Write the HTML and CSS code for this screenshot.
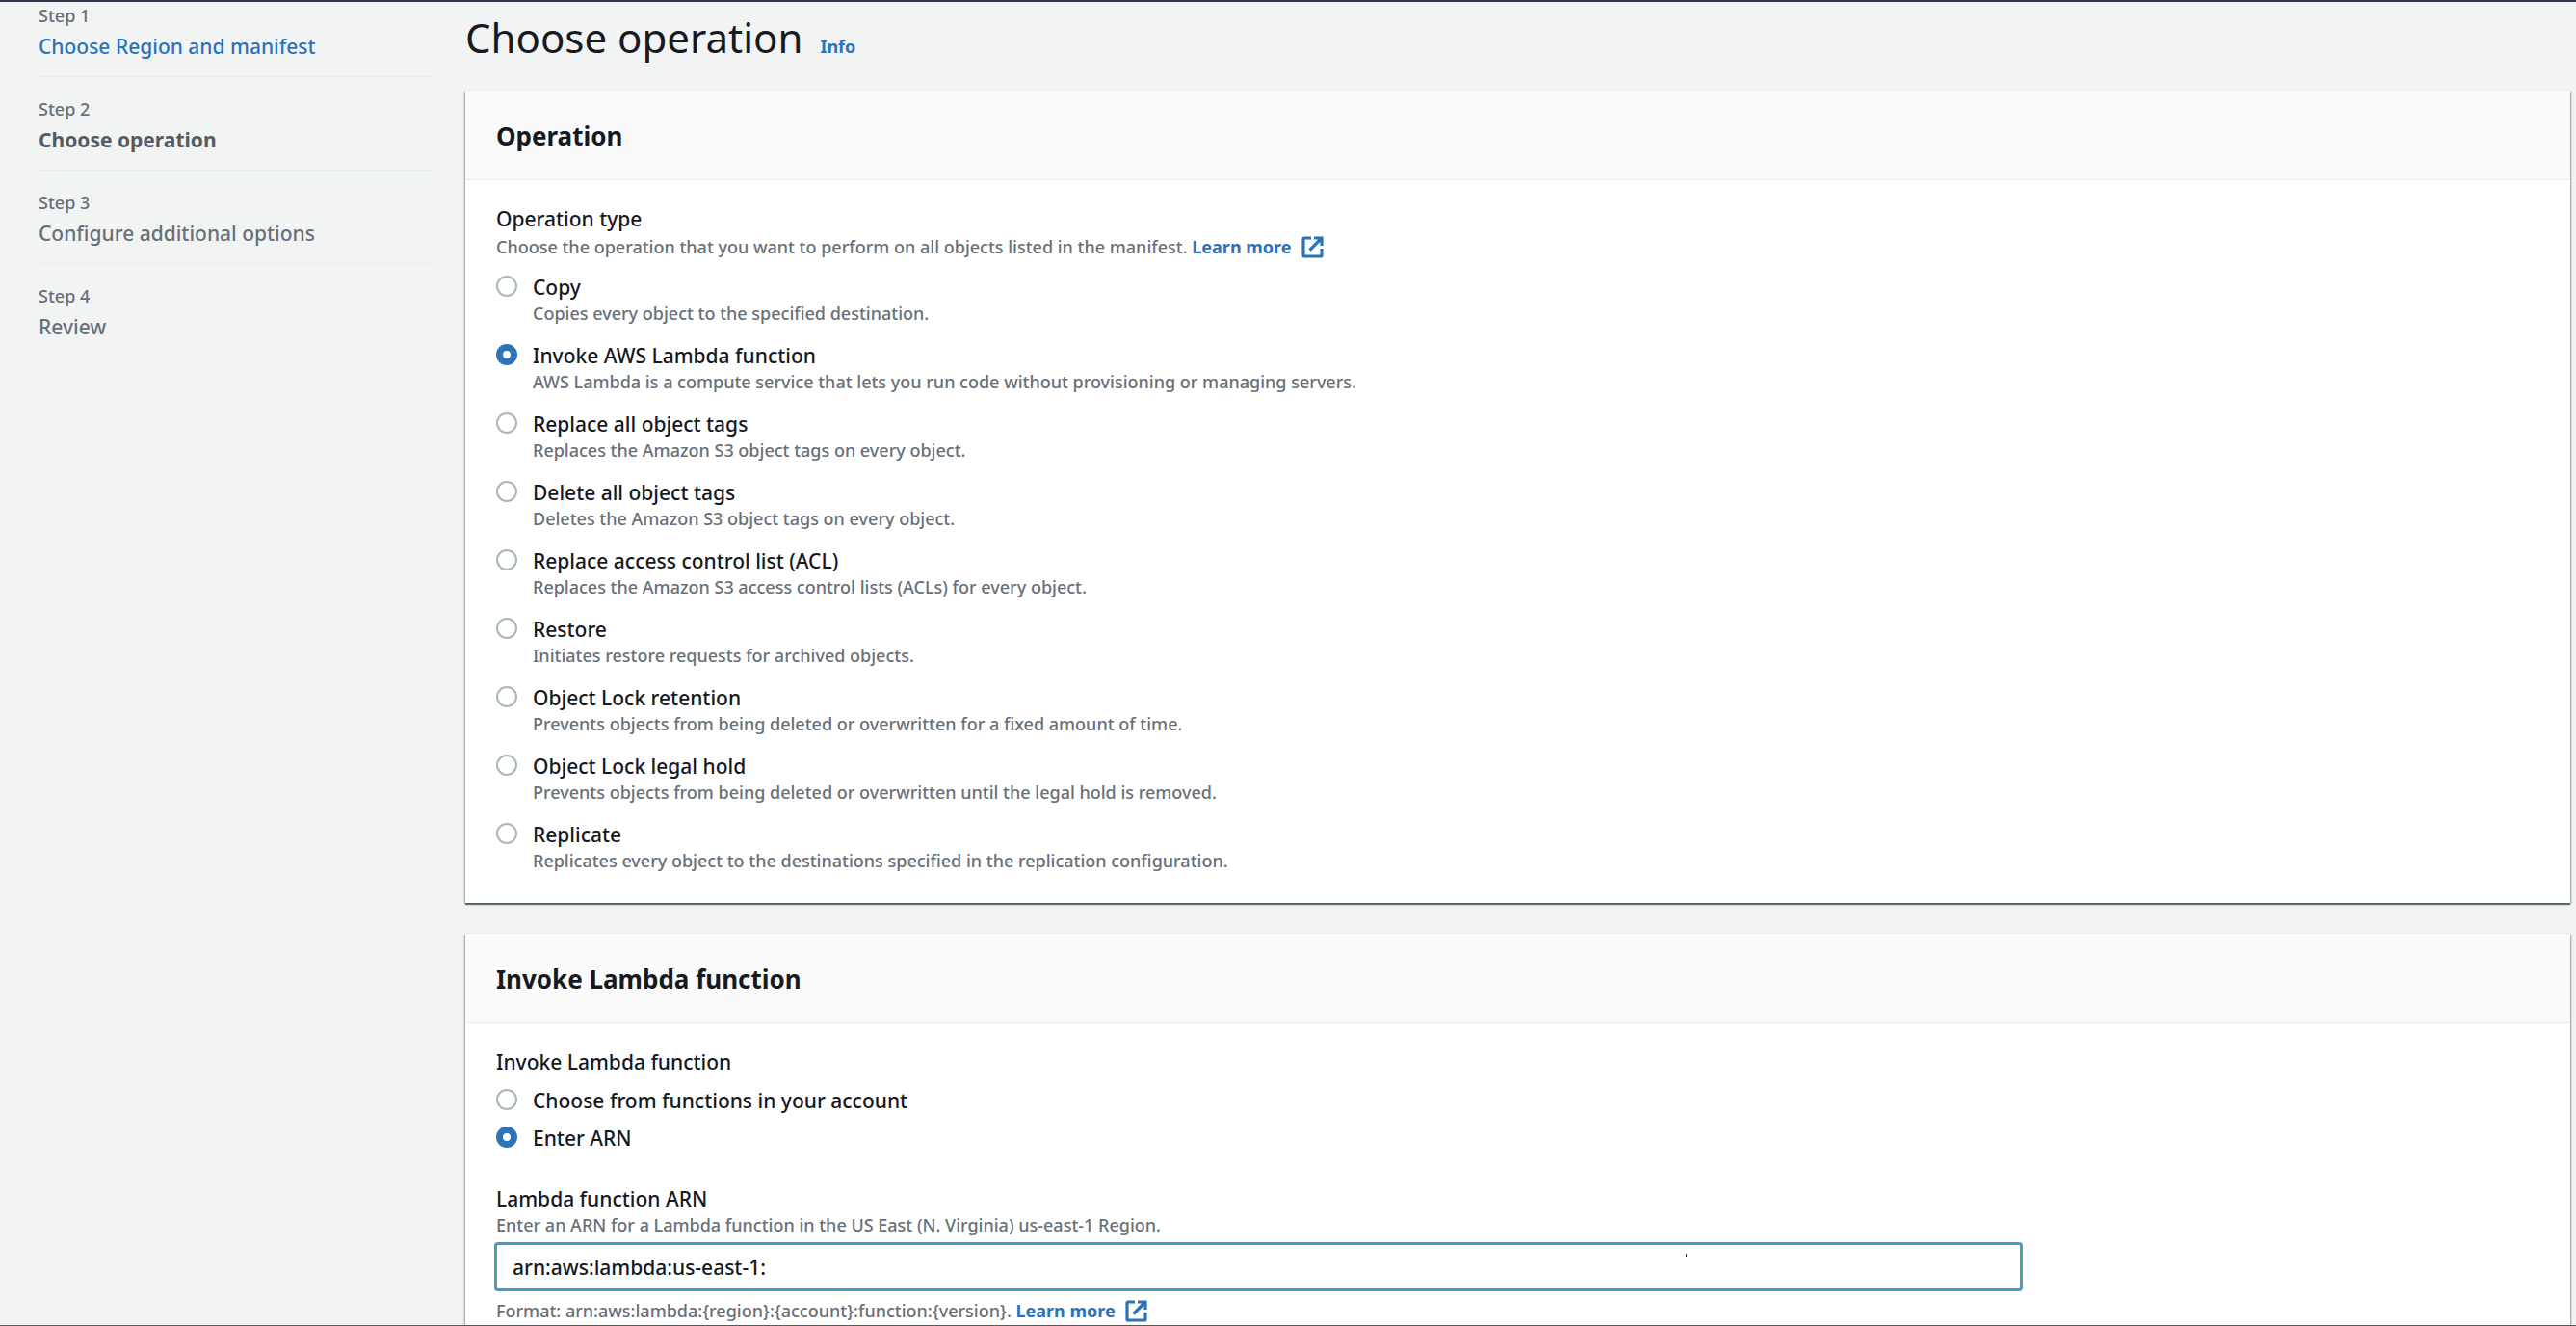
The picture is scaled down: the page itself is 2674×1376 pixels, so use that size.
FILE: index.html
```html
<!DOCTYPE html>
<html lang="en">
<head>
<meta charset="utf-8">
<meta name="viewport" content="width=device-width, initial-scale=1">
<title>Choose operation</title>
<link rel="stylesheet" href="styles.css">
</head>
<body>
<svg class="sprite" aria-hidden="true">
  <symbol id="external" viewBox="0 0 23 23">
    <path d="M10 2H3Q2 2 2 3V20Q2 21 3 21H20Q21 21 21 20V13M13 2H21V10M21 2L8.500 14.500" fill="none" stroke="currentColor" stroke-width="3.200"/>
  </symbol>
</svg>
<div class="page">
  <nav class="steps" aria-label="Steps">
    <ol class="steps-list">
      <li class="step"><span class="step-number">Step 1</span><a class="step-name" href="#">Choose Region and manifest</a></li>
      <li class="step step-current" aria-current="step"><span class="step-number">Step 2</span><span class="step-name">Choose operation</span></li>
      <li class="step"><span class="step-number">Step 3</span><span class="step-name">Configure additional options</span></li>
      <li class="step"><span class="step-number">Step 4</span><span class="step-name">Review</span></li>
    </ol>
  </nav>
  <main class="content">
    <div class="title-row">
      <h1>Choose operation</h1>
      <a class="link" href="#">Info</a>
    </div>

    <section class="card">
      <header class="card-header"><h2>Operation</h2></header>
      <div class="card-body" role="radiogroup" aria-labelledby="type-label">
        <p class="label" id="type-label">Operation type</p>
        <p class="hint hint-link">Choose the operation that you want to perform on all objects listed in the manifest. <a class="link" href="#">Learn more<svg class="icon" aria-hidden="true"><use href="#external"/></svg></a></p>
        <div class="options options-described">
          <label class="option"><input type="radio" name="operation"><span class="label">Copy</span><span class="hint">Copies every object to the specified destination.</span></label>
          <label class="option"><input type="radio" name="operation" checked><span class="label">Invoke AWS Lambda function</span><span class="hint">AWS Lambda is a compute service that lets you run code without provisioning or managing servers.</span></label>
          <label class="option"><input type="radio" name="operation"><span class="label">Replace all object tags</span><span class="hint">Replaces the Amazon S3 object tags on every object.</span></label>
          <label class="option"><input type="radio" name="operation"><span class="label">Delete all object tags</span><span class="hint">Deletes the Amazon S3 object tags on every object.</span></label>
          <label class="option"><input type="radio" name="operation"><span class="label">Replace access control list (ACL)</span><span class="hint">Replaces the Amazon S3 access control lists (ACLs) for every object.</span></label>
          <label class="option"><input type="radio" name="operation"><span class="label">Restore</span><span class="hint">Initiates restore requests for archived objects.</span></label>
          <label class="option"><input type="radio" name="operation"><span class="label">Object Lock retention</span><span class="hint">Prevents objects from being deleted or overwritten for a fixed amount of time.</span></label>
          <label class="option"><input type="radio" name="operation"><span class="label">Object Lock legal hold</span><span class="hint">Prevents objects from being deleted or overwritten until the legal hold is removed.</span></label>
          <label class="option"><input type="radio" name="operation"><span class="label">Replicate</span><span class="hint">Replicates every object to the destinations specified in the replication configuration.</span></label>
        </div>
      </div>
    </section>

    <section class="card">
      <header class="card-header"><h2>Invoke Lambda function</h2></header>
      <div class="card-body">
        <div role="radiogroup" aria-labelledby="source-label">
          <p class="label" id="source-label">Invoke Lambda function</p>
          <div class="options">
            <label class="option"><input type="radio" name="source"><span class="label">Choose from functions in your account</span></label>
            <label class="option"><input type="radio" name="source" checked><span class="label">Enter ARN</span></label>
          </div>
        </div>
        <div class="field">
          <label class="label" for="arn">Lambda function ARN</label>
          <p class="hint" id="arn-hint">Enter an ARN for a Lambda function in the US East (N. Virginia) us-east-1 Region.</p>
          <div class="input-wrap">
            <input class="input" id="arn" type="text" value="arn:aws:lambda:us-east-1:" aria-describedby="arn-hint">
            <span class="caret-mark"></span>
          </div>
          <p class="hint hint-link">Format: arn:aws:lambda:{region}:{account}:function:{version}. <a class="link" href="#">Learn more<svg class="icon" aria-hidden="true"><use href="#external"/></svg></a></p>
        </div>
      </div>
    </section>
  </main>
</div>
</body>
</html>
```
FILE: styles.css
```css
* {
  box-sizing: border-box;
}

body {
  margin: 0;
  background: #f2f3f3;
  color: #16191f;
  font-family: "Noto Sans", "Open Sans", sans-serif;
  font-size: 21px;
  font-weight: 500;
  line-height: 28px;
}

h1, h2, p, ol {
  margin: 0;
  padding: 0;
}

.sprite {
  display: none;
}

.page {
  display: grid;
  grid-template-columns: 412px minmax(0, 1fr);
  column-gap: 31px;
  height: 100vh;
  overflow: hidden;
  padding: 0 6px 0 40px;
  border-top: 2px solid #2f3a4a;
  border-bottom: 1px solid #545b64;
}

/* Wizard steps */
.steps {
  padding-top: 1px;
}

.steps-list {
  display: flex;
  flex-direction: column;
  gap: 20px;
  list-style: none;
}

.step {
  display: flex;
  flex-direction: column;
  gap: 5px;
  padding-bottom: 17px;
  border-bottom: 1px solid #eaeded;
  color: #687078;
}

.step:last-child {
  border-bottom: 0;
}

.step-number {
  font-size: 18px;
  line-height: 26px;
}

.step-current .step-name {
  color: #545b64;
  font-weight: 700;
}

a {
  color: #2a73b8;
  text-decoration: none;
}

.link {
  font-size: 18px;
  font-weight: 700;
}

/* Page title */
.content {
  padding-top: 12px;
}

.title-row {
  display: flex;
  align-items: baseline;
  gap: 18px;
  margin-bottom: 30px;
}

h1 {
  font-size: 42px;
  font-weight: 400;
  line-height: 50px;
}

/* Cards */
.card {
  margin-bottom: 32px;
  background: #fff;
  box-shadow: 0 -1px 0 #eaeded, 0 2px 1px rgba(0, 28, 36, 0.5), 1px 1px 2px rgba(0, 28, 36, 0.3), -1px 1px 2px rgba(0, 28, 36, 0.3);
}

.card-header {
  padding: 30px 32px 28px;
  background: #fafafa;
  border-bottom: 1px solid #eaeded;
}

h2 {
  font-size: 26px;
  font-weight: 700;
  line-height: 34px;
}

.card-body {
  padding: 26px 32px 31px;
}

.label {
  display: block;
}

.hint {
  color: #687078;
  font-size: 18px;
  line-height: 26px;
}

.hint-link {
  line-height: 30px;
}

.icon {
  width: 23px;
  height: 23px;
  margin-left: 10px;
  vertical-align: -5px;
}

/* Radio options */
.options {
  display: flex;
  flex-direction: column;
  align-items: flex-start;
  gap: 11px;
  margin-top: 12px;
}

.options-described {
  gap: 17px;
  margin-top: 13px;
}

.option {
  display: grid;
  grid-template-columns: 22px auto;
  column-gap: 16px;
}

.option .hint {
  grid-column: 2;
}

.option input {
  appearance: none;
  width: 22px;
  height: 22px;
  margin: 2px 0 0;
  border: 2px solid #aab7b8;
  border-radius: 50%;
  background: #fff;
}

.option input:checked {
  border: 7px solid #2e73b8;
}

/* ARN field */
.field {
  margin-top: 35px;
}

.input-wrap {
  position: relative;
  width: calc(75% - 8px);
  margin: 7px 0;
}

.input {
  display: block;
  width: 100%;
  height: 47px;
  padding: 0 16px;
  border: 1px solid #449dc5;
  border-radius: 2px;
  outline: 0;
  box-shadow: 0 0 0 2px #449dc5;
  background: #fff;
  color: inherit;
  font: inherit;
}

.caret-mark {
  position: absolute;
  top: 10px;
  left: 78%;
  width: 1px;
  height: 3px;
  background: #16191f;
}
```
